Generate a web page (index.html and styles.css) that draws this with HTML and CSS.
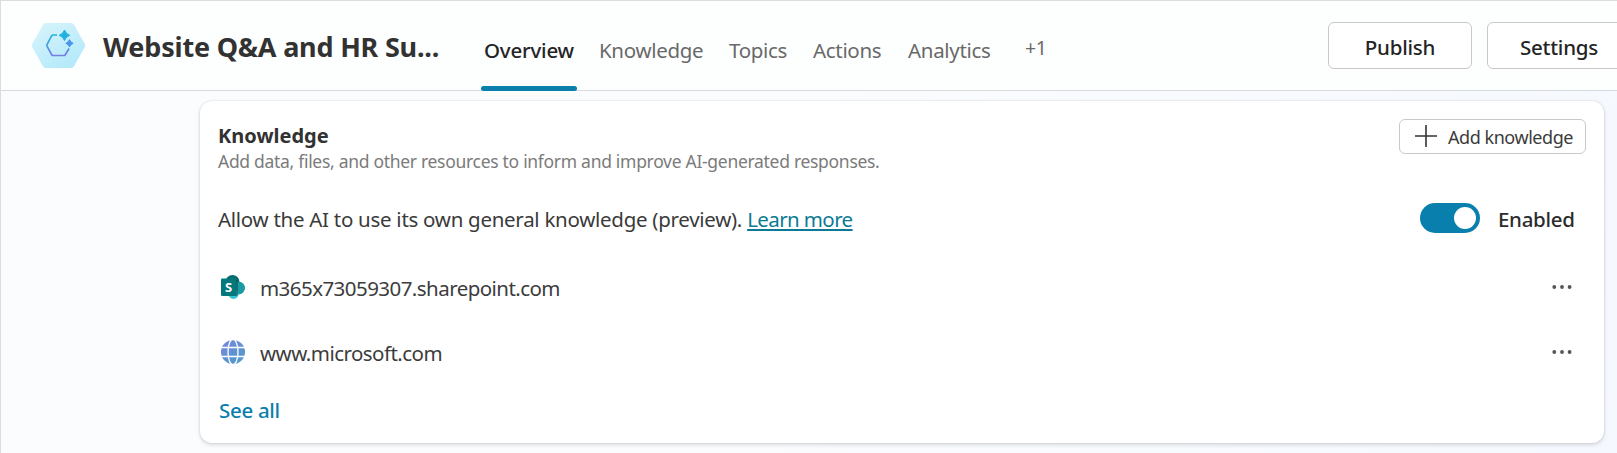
FILE: index.html
```html
<!DOCTYPE html>
<html lang="en">
<head>
<meta charset="utf-8">
<title>Website Q&amp;A and HR Support</title>
<link rel="stylesheet" href="styles.css">
</head>
<body>
<div class="app">
  <header class="topbar">
    <svg class="agent-icon" width="56" height="48" viewBox="0 0 56 48" fill="none">
      <defs>
        <linearGradient id="hexFill" x1="10" y1="0" x2="40" y2="48" gradientUnits="userSpaceOnUse"><stop stop-color="#d7f4fb"/><stop offset="1" stop-color="#b3e9fa"/></linearGradient>
        <linearGradient id="hexLine" x1="0" y1="13" x2="0" y2="35" gradientUnits="userSpaceOnUse"><stop stop-color="#25b4dc"/><stop offset=".55" stop-color="#4a9be0"/><stop offset="1" stop-color="#7a7ae6"/></linearGradient>
      </defs>
      <path d="M16 2H41Q43 2 44 3.700L54.800 23Q55.500 24.500 54.800 26L44 45.300Q43 47 41 47H16Q14 47 13 45.300L2.200 26Q1.500 24.500 2.200 23L13 3.700Q14 2 16 2Z" fill="url(#hexFill)"/>
      <path d="M27 14H23Q22.200 14 21.700 14.700L17 23.600Q16.600 24.400 17 25.200L21.700 33.700Q22.200 34.500 23 34.500H34Q34.800 34.500 35.300 33.700L39.100 27.500" stroke="url(#hexLine)" stroke-width="1.700"/>
      <path d="M34.500 9Q35.800 13 39.800 14.300Q35.800 15.600 34.500 19.600Q33.200 15.600 29.200 14.300Q33.200 13 34.500 9Z" fill="#22b0e0" stroke="#22b0e0" stroke-width="1" stroke-linejoin="round"/>
      <path d="M39.500 18.600Q40.400 21.400 43.200 22.300Q40.400 23.200 39.500 26Q38.600 23.200 35.800 22.300Q38.600 21.400 39.500 18.600Z" fill="#4a94ea" stroke="#4a94ea" stroke-width="1" stroke-linejoin="round"/>
    </svg>
    <h1 class="title">Website Q&amp;A and HR Su...</h1>
    <nav class="tabs">
      <a class="tab tab-active">Overview</a>
      <a class="tab tab-knowledge">Knowledge</a>
      <a class="tab tab-topics">Topics</a>
      <a class="tab tab-actions">Actions</a>
      <a class="tab tab-analytics">Analytics</a>
      <a class="tab tab-more">+1</a>
    </nav>
    <div class="actions">
      <button class="btn">Publish</button>
      <button class="btn btn-settings">Settings</button>
    </div>
  </header>
  <main class="content">
    <section class="card">
      <div class="card-head">
        <div>
          <h2 class="card-title">Knowledge</h2>
          <p class="card-sub">Add data, files, and other resources to inform and improve AI-generated responses.</p>
        </div>
        <button class="add"><svg width="22" height="22" viewBox="0 0 22 22"><path d="M11 0V22M0 11H22" stroke="#333" stroke-width="1.600"/></svg><span>Add knowledge</span></button>
      </div>
      <div class="row">
        <p class="allow">Allow the AI to use its own general knowledge (preview). <a class="learn">Learn more</a></p>
        <div class="state"><span class="toggle"><span class="knob"></span></span><span class="enabled">Enabled</span></div>
      </div>
      <div class="row source">
        <svg class="source-icon" width="24" height="24" viewBox="0 0 24 24">
          <circle cx="11.500" cy="7" r="7" fill="#036c70"/>
          <circle cx="17.500" cy="13" r="6.500" fill="#1a9ba1"/>
          <circle cx="12.500" cy="19" r="5" fill="#37c6d0"/>
          <path d="M6 5H16Q17 5 17 6V19Q17 21 15.500 21H7.600A5 5 0 0 1 7.600 18Z" fill="#064f52" opacity=".6"/>
          <rect x="0" y="3.500" width="15" height="17.500" rx="1.200" fill="#04787c"/>
          <text class="s-letter" x="7.500" y="16.900" text-anchor="middle">S</text>
        </svg>
        <span class="source-name">m365x73059307.sharepoint.com</span>
        <svg class="dots" width="20" height="6" viewBox="0 0 20 6"><circle cx="2.300" cy="3" r="1.900"/><circle cx="10" cy="3" r="1.900"/><circle cx="17.600" cy="3" r="1.900"/></svg>
      </div>
      <div class="row source">
        <svg class="source-icon" width="24" height="24" viewBox="0 0 24 24">
          <defs><linearGradient id="globe" x1="4" y1="2" x2="20" y2="23" gradientUnits="userSpaceOnUse"><stop stop-color="#7488da"/><stop offset="1" stop-color="#4e9cca"/></linearGradient></defs>
          <circle cx="12" cy="12" r="12" fill="url(#globe)"/>
          <path d="M0 7.500H24M0 16.500H24" stroke="#fff" stroke-width="1.300"/>
          <ellipse cx="12" cy="12" rx="5" ry="12.600" fill="none" stroke="#fff" stroke-width="1.300"/>
        </svg>
        <span class="source-name">www.microsoft.com</span>
        <svg class="dots" width="20" height="6" viewBox="0 0 20 6"><circle cx="2.300" cy="3" r="1.900"/><circle cx="10" cy="3" r="1.900"/><circle cx="17.600" cy="3" r="1.900"/></svg>
      </div>
      <a class="see-all">See all</a>
    </section>
  </main>
</div>
</body>
</html>
```
FILE: styles.css
```css
* { box-sizing: border-box; margin: 0; padding: 0; }

body {
  overflow: hidden;
  font-family: "Noto Sans", "Open Sans", sans-serif;
  font-size: 20.5px;
  color: #3a3a3a;
}

.app {
  display: flex;
  flex-direction: column;
  height: 453px;
  border-top: 1px solid #dcdcdc;
  border-left: 1px solid #dcdcdc;
  background: linear-gradient(100deg, #fbfcfe 0%, #fafcfe 50%, #f5f8fe 100%);
}

.topbar {
  display: flex;
  flex: none;
  height: 90px;
  padding-left: 29px;
  border-bottom: 1px solid #d9dadd;
  background: #fdfefe;
}

.agent-icon { flex: none; margin-top: 20px; }

.title {
  flex: none;
  width: 378px;
  padding-left: 17px;
  padding-top: 26px;
  font-size: 27px;
  font-weight: 700;
  line-height: 40px;
  letter-spacing: -0.2px;
  white-space: nowrap;
  color: #323232;
}

.tabs { display: flex; flex: none; width: 864px; margin-left: 17px; height: 90px; }

.tab {
  flex: none;
  line-height: 30px;
  padding-top: 34px;
  letter-spacing: -0.32px;
  color: #696969;
}

.tab-active {
  position: relative;
  width: 96px;
  padding-left: 3px;
  font-weight: 500;
  letter-spacing: -0.2px;
  color: #242424;
}

.tab-active::after {
  content: "";
  position: absolute;
  left: 0;
  right: 0;
  bottom: 0;
  height: 5px;
  border-radius: 2.5px;
  background: #0a7fac;
}

.tab-knowledge { width: 130px; margin-left: 22px; }
.tab-topics { width: 84px; }
.tab-actions { width: 95px; }
.tab-analytics { width: 117px; }
.tab-more { padding-top: 32px; font-size: 19.5px; }

.actions { display: flex; flex: none; gap: 15px; padding-top: 21px; margin-left: -17px; }

.btn {
  flex: none;
  width: 144px;
  height: 47px;
  padding-top: 2px;
  border: 1px solid #c9c9c9;
  border-radius: 6px;
  background: #fff;
  font: 500 20.5px/40px "Noto Sans", sans-serif;
  letter-spacing: -0.2px;
  color: #242424;
}

.content { padding: 10px 13px 10px 199px; }

.card {
  height: 342px;
  padding: 18px 18px 0;
  border-radius: 12px;
  background: #fff;
  box-shadow: 0 0 2px rgba(0, 0, 0, 0.16), 0 2px 4px rgba(0, 0, 0, 0.13);
}

.card-head { display: flex; justify-content: space-between; height: 82px; }

.card-title {
  margin-top: 5px;
  font-size: 20px;
  font-weight: 700;
  line-height: 24px;
  color: #323232;
}

.card-sub {
  font-size: 17.5px;
  line-height: 27px;
  letter-spacing: -0.3px;
  color: #7b7b7b;
}

.add {
  display: flex;
  align-items: center;
  gap: 11px;
  width: 187px;
  height: 35px;
  padding-left: 15px;
  border: 1px solid #c9c9c9;
  border-radius: 6px;
  background: #fff;
  font: 400 18px/28px "Noto Sans", sans-serif;
  letter-spacing: -0.45px;
  white-space: nowrap;
  color: #3b3b3b;
}

.add svg { margin-top: -2px; }
.add span { padding-top: 1px; }

.row { display: flex; align-items: center; height: 36px; }

.allow { letter-spacing: -0.28px; line-height: 36px; white-space: nowrap; }

.learn {
  letter-spacing: -0.6px;
  text-decoration: underline;
  text-decoration-thickness: 2px;
  text-underline-offset: 2px;
  text-decoration-skip-ink: none;
  color: #0c7a95;
}

.state { display: flex; align-items: center; margin-left: auto; padding-right: 11px; }

.toggle { width: 60px; height: 30px; margin-top: -2px; padding: 4px 4px 4px 34px; border-radius: 15px; background: #087fac; }
.knob { display: block; width: 22px; height: 22px; border-radius: 50%; background: #fff; }

.enabled { width: 77px; margin-left: 18px; font-weight: 500; letter-spacing: -0.3px; white-space: nowrap; color: #2c2c2c; }

.source { margin-top: 32px; padding: 0 14px 0 3px; }
.source + .source { margin-top: 29px; }
.source-icon { flex: none; }
.source-name { padding-top: 2px; margin-left: 15px; letter-spacing: -0.55px; line-height: 36px; color: #3c3c3c; }
.dots { margin-left: auto; fill: #555; }
.s-letter { font: 700 13px "Noto Sans", sans-serif; fill: #fff; }

.see-all {
  display: inline-block;
  margin-top: 26px;
  padding-left: 1px;
  font-weight: 500;
  line-height: 28px;
  letter-spacing: -0.3px;
  color: #0a7fac;
}
```
